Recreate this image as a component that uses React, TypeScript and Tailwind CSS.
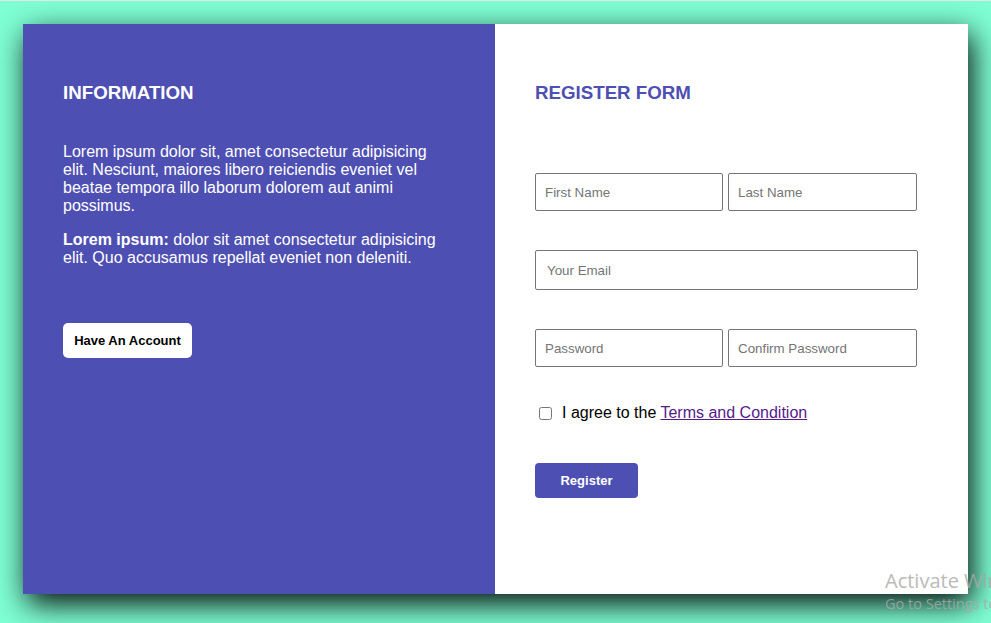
export default function App() {
  return (
    <div className="relative min-h-screen w-full overflow-hidden bg-[#7fffd4] border-t border-[#e6e6e6] pt-[23px] pl-[23px] font-['Liberation_Sans',Arial,sans-serif]">
      <div className="flex w-[945px] h-[570px] shadow-[4px_10px_28px_rgba(0,0,0,0.95)]">
        {/* info side */}
        <div className="w-[472px] bg-[#4e4fb2] px-[40px] pt-[58px] text-white">
          <h2 className="text-[18.72px] font-bold leading-[21px] uppercase">Information</h2>
          <p className="mt-[40px] text-[16px] leading-[18px]">
            Lorem ipsum dolor sit, amet consectetur adipisicing elit. Nesciunt, maiores libero reiciendis eveniet vel
            beatae tempora illo laborum dolorem aut animi possimus.
          </p>
          <p className="mt-[16px] text-[16px] leading-[18px]">
            <b>Lorem ipsum:</b> dolor sit amet consectetur adipisicing elit. Quo accusamus repellat eveniet non deleniti.
          </p>
          <button
            type="button"
            className="mt-[56px] h-[35px] w-[129px] rounded-[5px] bg-white text-[13px] font-bold text-black"
          >
            Have An Account
          </button>
        </div>

        {/* register side */}
        <div className="w-[473px] bg-white pl-[40px] pt-[58px]">
          <h2 className="text-[18.72px] font-bold leading-[21px] uppercase text-[#4e4fb2]">Register Form</h2>
          <form className="mt-[70px] w-[383px]" onSubmit={(e) => e.preventDefault()}>
            <div className="flex gap-[5px]">
              <input
                placeholder="First Name"
                className="h-[38px] w-[188px] rounded-[2px] border border-[#767676] px-[9px] text-[13.33px] placeholder:text-[#757575] outline-none"
              />
              <input
                placeholder="Last Name"
                className="h-[38px] w-[189px] rounded-[2px] border border-[#767676] px-[9px] text-[13.33px] placeholder:text-[#757575] outline-none"
              />
            </div>
            <input
              placeholder="Your Email"
              className="mt-[39px] block h-[40px] w-[383px] rounded-[2px] border border-[#767676] px-[11px] text-[13.33px] placeholder:text-[#757575] outline-none"
            />
            <div className="mt-[39px] flex gap-[5px]">
              <input
                type="password"
                placeholder="Password"
                className="h-[38px] w-[188px] rounded-[2px] border border-[#767676] px-[9px] text-[13.33px] placeholder:text-[#757575] outline-none"
              />
              <input
                type="password"
                placeholder="Confirm Password"
                className="h-[38px] w-[189px] rounded-[2px] border border-[#767676] px-[9px] text-[13.33px] placeholder:text-[#757575] outline-none"
              />
            </div>
            <label className="mt-[37px] flex items-center text-[16px] leading-[18px] text-black">
              <input type="checkbox" className="ml-[4px] mr-[10px] h-[13px] w-[13px]" />
              <span>
                I agree to the{" "}
                <a href="#" className="text-[#551a8b] underline">
                  Terms and Condition
                </a>
              </span>
            </label>
            <button
              type="submit"
              className="mt-[41px] h-[35px] w-[103px] rounded-[4px] bg-[#4e4fb2] text-[13px] font-bold text-white"
            >
              Register
            </button>
          </form>
        </div>
      </div>

      {/* windows watermark */}
      <div className="pointer-events-none absolute left-[885px] top-[567px] whitespace-nowrap font-['Open_Sans',sans-serif] text-[#a9a9a9]">
        <div className="text-[20px] leading-[26px] opacity-80">Activate Windows</div>
        <div className="text-[14.5px] leading-[20px] opacity-80">Go to Settings to activate Windows.</div>
      </div>
    </div>
  );
}
